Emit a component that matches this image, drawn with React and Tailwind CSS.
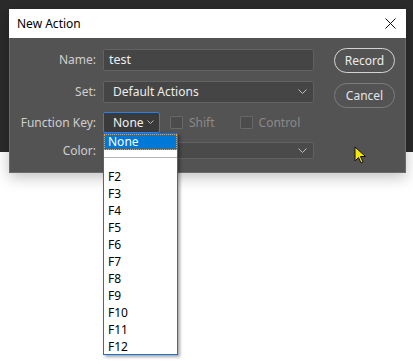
import React from 'react';

const font = { fontFamily: '"Noto Sans", "Open Sans", Arial, sans-serif' };

function Chevron({ className = '', w = 9, h = 6 }) {
  return (
    <svg width={w} height={h} viewBox={`0 0 ${w} ${h}`} className={className}>
      <polyline points={`0.5,0.5 ${w / 2},${h - 1.5} ${w - 0.5},0.5`} fill="none" stroke="currentColor" strokeWidth="1" />
    </svg>
  );
}

function Label({ children }) {
  return <div className="w-[87px] shrink-0 pr-[1px] text-right text-[12px] text-[#cfcfcf]">{children}</div>;
}

const keys = ['F2', 'F3', 'F4', 'F5', 'F6', 'F7', 'F8', 'F9', 'F10', 'F11', 'F12'];

export default function App() {
  return (
    <div className="relative w-[413px] h-[364px] bg-white overflow-hidden" style={font}>
      <div className="h-[152px] bg-[#2b2b2b]" />

      {/* dialog window */}
      <div className="absolute left-[9px] top-[9px] w-[397px] shadow-[0_4px_14px_rgba(0,0,0,0.25)]">
        <div className="h-[29px] bg-white flex items-center justify-between pl-[8px] pr-[10px]">
          <span className="text-[12px] text-black">New Action</span>
          <svg width="11" height="11" viewBox="0 0 11 11">
            <path d="M0.5 0.5 L10.5 10.5 M10.5 0.5 L0.5 10.5" stroke="#111" strokeWidth="1" />
          </svg>
        </div>
        <div className="h-[135px] bg-[#535353] border border-t-0 border-[#6b6b6b] flex">
          <div className="flex flex-col pt-[11px] w-[305px]">
            <div className="flex items-center gap-[6px] h-[22px]">
              <Label>Name:</Label>
              <div className="w-[211px] h-[22px] bg-[#454545] border border-[#626262] rounded-[2px] flex items-center pl-[5px] text-[12.5px] text-[#ececec]">test</div>
            </div>
            <div className="flex items-center gap-[6px] h-[22px] mt-[10px]">
              <Label>Set:</Label>
              <div className="w-[211px] h-[22px] bg-[#454545] border border-[#626262] rounded-[2px] flex items-center justify-between pl-[9px] pr-[6px] text-[12px] text-[#ececec]">
                <span>Default Actions</span>
                <Chevron className="text-[#bdbdbd]" />
              </div>
            </div>
            <div className="flex items-center gap-[6px] h-[21px] mt-[9px]">
              <Label>Function Key:</Label>
              <div className="w-[57px] h-[21px] bg-[#3a3a3a] border border-[#2680eb] rounded-[2px] flex items-center justify-between pl-[9px] pr-[5px] text-[12px] text-[#f0f0f0]">
                <span>None</span>
                <Chevron w={7} h={5} className="text-[#bdbdbd]" />
              </div>
              <div className="flex items-center ml-[4px]">
                <div className="w-[13px] h-[13px] border border-[#686868] bg-[#4c4c4c] rounded-[1px]" />
                <span className="ml-[6px] text-[12px] text-[#8a8a8a]">Shift</span>
              </div>
              <div className="flex items-center ml-[19px]">
                <div className="w-[13px] h-[13px] border border-[#686868] bg-[#4c4c4c] rounded-[1px]" />
                <span className="ml-[6px] text-[12px] text-[#8a8a8a]">Control</span>
              </div>
            </div>
            <div className="flex items-center gap-[6px] h-[17px] mt-[9px]">
              <Label>Color:</Label>
              <div className="w-[211px] h-[17px] bg-[#4a4a4a] border border-[#626262] rounded-[2px] flex items-center justify-end pr-[6px]">
                <Chevron className="text-[#bdbdbd]" />
              </div>
            </div>
          </div>
          <div className="flex flex-col pt-[10px] ml-[19px] gap-[10px]">
            <div className="w-[61px] h-[25px] rounded-full border-[1.5px] border-[#d4d4d4] flex items-center justify-center text-[12px] text-[#ececec]">Record</div>
            <div className="w-[61px] h-[25px] rounded-full border border-[#7c7c7c] flex items-center justify-center text-[12px] text-[#e4e4e4]">Cancel</div>
          </div>
        </div>
      </div>

      {/* open list of the Function Key select */}
      <div className="absolute left-[103px] top-[133px] w-[75px] h-[222px] bg-white border border-[#1d6fd0] shadow-[2px_2px_3px_rgba(0,0,0,0.35)] text-[12px] text-black">
        <div className="h-[16px] bg-[#0078d7] text-white pl-[4px] leading-[15px] outline-1 outline-dotted outline-[#f0a040] -outline-offset-1">None</div>
        <div className="h-[7px]" />
        <div className="h-[1px] bg-[#b4b4b4]" />
        <div className="h-[10px]" />
        {keys.map(k => (
          <div key={k} className="h-[17px] pl-[4px] leading-[17px]">{k}</div>
        ))}
      </div>

      {/* mouse pointer */}
      <svg className="absolute left-[354px] top-[146px]" width="13" height="19" viewBox="0 0 13 19">
        <path d="M1 1 L1 15 L4.5 11.5 L7 17 L9 16 L6.5 10.5 L11.5 10.5 Z" fill="#f5e900" stroke="#111" strokeWidth="1" strokeLinejoin="round" />
      </svg>
    </div>
  );
}
